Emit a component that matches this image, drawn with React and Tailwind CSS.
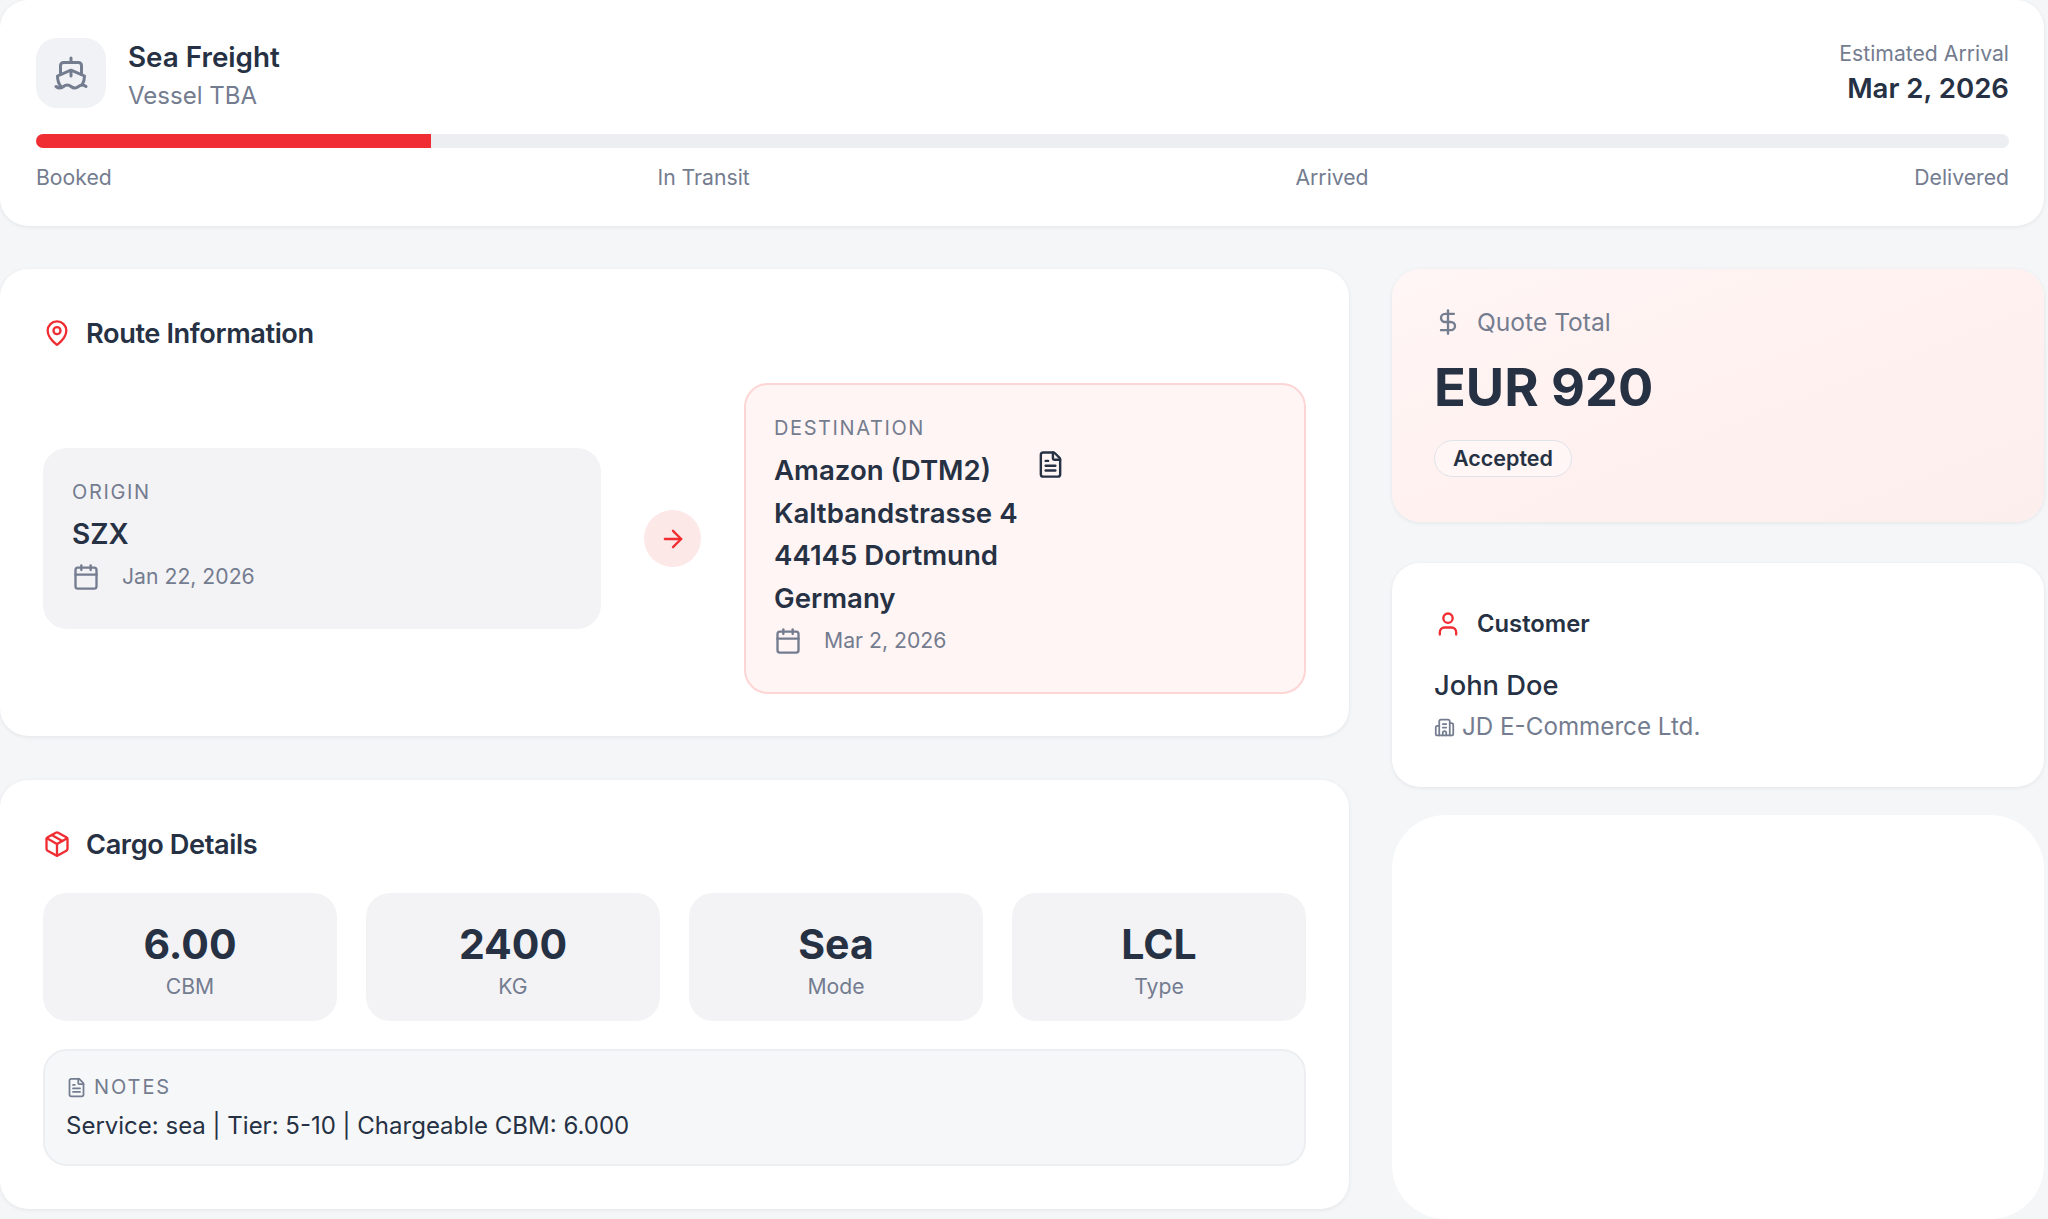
import { ArrowRight, Building2, Calendar, DollarSign, FileText, MapPin, Package, Ship, User } from "lucide-react";

const stats = [
  { value: "6.00", label: "CBM" },
  { value: "2400", label: "KG" },
  { value: "Sea", label: "Mode" },
  { value: "LCL", label: "Type" },
];

const card = "bg-white rounded-[28px] shadow-[0_1px_4px_rgba(17,24,39,0.08)]";

function SectionTitle({ icon: Icon, children }) {
  return (
    <div className="flex items-center gap-[15px] h-[28px]">
      <Icon size={28} strokeWidth={2} className="text-[#f02d32] shrink-0" />
      <h2 className="text-[27.2px] font-semibold tracking-[-0.4px] text-[#263144] translate-y-[1px]">{children}</h2>
    </div>
  );
}

function DateRow({ children }) {
  return (
    <div className="flex items-center gap-[22px] h-[28px] text-[21.2px] text-[#747c8f]">
      <Calendar size={28} strokeWidth={2} className="shrink-0" />
      <span>{children}</span>
    </div>
  );
}

export default function App() {
  return (
    <div className="min-h-[1219px] bg-[#f5f6f8] pr-[4px] font-['Inter',sans-serif] text-[#263144]">
      <header className={`${card} h-[226px] pl-[36px] pr-[35px] pt-[38px]`}>
        <div className="flex justify-between">
          <div className="flex items-start gap-[22px]">
            <div className="w-[70px] h-[70px] rounded-[21px] bg-[#f1f2f5] flex items-center justify-center">
              <Ship size={36} strokeWidth={2} className="text-[#747c8f]" />
            </div>
            <div>
              <div className="text-[27.8px] leading-[38px] font-semibold">Sea Freight</div>
              <div className="pt-[1px] text-[24px] leading-[37px] text-[#747c8f]">Vessel TBA</div>
            </div>
          </div>
          <div className="text-right">
            <div className="text-[21.2px] leading-[30px] text-[#747c8f]">Estimated Arrival</div>
            <div className="text-[27.6px] leading-[40px] font-semibold">Mar 2, 2026</div>
          </div>
        </div>
        <div className="mt-[20px] h-[14px] rounded-full bg-[#eceef2] overflow-hidden">
          <div className="h-full w-[20%] bg-[#f02d32]" />
        </div>
        <div className="mt-[15px] flex justify-between text-[21.2px] leading-[28px] text-[#747c8f]">
          <span>Booked</span>
          <span>In Transit</span>
          <span>Arrived</span>
          <span>Delivered</span>
        </div>
      </header>

      <div className="mt-[43px] flex gap-[43px] items-start">
        <div className="w-[1349px] flex flex-col gap-[44px]">
          <section className={`${card} h-[467px] px-[43px] pt-[50px]`}>
            <SectionTitle icon={MapPin}>Route Information</SectionTitle>
            <div className="mt-[36px] flex items-center">
              <div className="w-[558px] h-[181px] rounded-[24px] bg-[#f3f3f6] px-[29px] pt-[30px]">
                <div className="text-[20px] leading-[28px] tracking-[1.65px] text-[#747c8f]">ORIGIN</div>
                <div className="mt-[7px] text-[28px] leading-[42px] font-semibold">SZX</div>
                <div className="mt-[8px]">
                  <DateRow>Jan 22, 2026</DateRow>
                </div>
              </div>
              <div className="mx-[43px] w-[57px] h-[57px] rounded-full bg-[#fde8e8] flex items-center justify-center shrink-0">
                <ArrowRight size={28} strokeWidth={2} className="text-[#f02d32]" />
              </div>
              <div className="flex-1 h-[311px] rounded-[24px] bg-[#fff5f4] border-2 border-[#fdd5d5] pl-[28px] pr-[29px] pt-[29px]">
                <div className="text-[20px] leading-[28px] tracking-[1.6px] text-[#747c8f]">DESTINATION</div>
                <div className="relative mt-[7px] text-[27.6px] leading-[42.5px] font-semibold">
                  <div>Amazon (DTM2)</div>
                  <div>Kaltbandstrasse 4</div>
                  <div>44145 Dortmund</div>
                  <div>Germany</div>
                  <FileText size={29} strokeWidth={2} className="absolute left-[262px] top-[1px] text-[#263144]" />
                </div>
                <div className="mt-[8px]">
                  <DateRow>Mar 2, 2026</DateRow>
                </div>
              </div>
            </div>
          </section>

          <section className={`${card} h-[429px] px-[43px] pt-[50px]`}>
            <SectionTitle icon={Package}>Cargo Details</SectionTitle>
            <div className="mt-[35px] grid grid-cols-4 gap-[29px]">
              {stats.map((s) => (
                <div key={s.label} className="h-[128px] rounded-[24px] bg-[#f3f3f6] flex flex-col items-center pt-[23px]">
                  <div className="text-[41px] leading-[56px] font-bold">{s.value}</div>
                  <div className="text-[21.2px] leading-[30px] -mt-[1px] text-[#747c8f]">{s.label}</div>
                </div>
              ))}
            </div>
            <div className="mt-[28px] h-[117px] rounded-[24px] bg-[#f6f7f9] border-2 border-[#eceef1] px-[21px] pt-[22px]">
              <div className="flex items-center gap-[7px] h-[28px] text-[20px] tracking-[1.9px] text-[#747c8f]">
                <FileText size={21} strokeWidth={2} className="shrink-0" />
                <span>NOTES</span>
              </div>
              <div className="mt-[8px] text-[24px] leading-[34px]">Service: sea | Tier: 5-10 | Chargeable CBM: 6.000</div>
            </div>
          </section>
        </div>

        <aside className="flex-1 flex flex-col">
          <section className="h-[253px] rounded-[28px] bg-linear-to-br from-[#fff6f5] via-[#fff1f0] to-[#fdeeee] shadow-[0_1px_4px_rgba(17,24,39,0.08)] pl-[42px] pr-[43px] pt-[39px]">
            <div className="flex items-center gap-[15px] h-[28px] text-[24.6px] text-[#747c8f]">
              <DollarSign size={28} strokeWidth={2} className="shrink-0" />
              <span>Quote Total</span>
            </div>
            <div className="mt-[16px] text-[52.4px] leading-[70px] font-bold">EUR 920</div>
            <div className="mt-[18px] w-[138px] h-[37px] rounded-full border border-[#dfe3ea] bg-[#fff6f5] flex items-center justify-center text-[21.5px] font-semibold">
              Accepted
            </div>
          </section>

          <section className={`${card} mt-[41px] h-[224px] pl-[42px] pr-[43px] pt-[47px]`}>
            <div className="flex items-center gap-[15px] h-[28px]">
              <User size={28} strokeWidth={2} className="text-[#f02d32] shrink-0" />
              <h3 className="text-[23.8px] font-semibold">Customer</h3>
            </div>
            <div className="mt-[30px] text-[27.3px] leading-[36px] font-medium">John Doe</div>
            <div className="mt-[6px] flex items-center gap-[7px] text-[24.2px] leading-[34px] text-[#747c8f]">
              <Building2 size={21} strokeWidth={2} className="shrink-0" />
              <span>JD E-Commerce Ltd.</span>
            </div>
          </section>

          <section className="mt-[28px] h-[404px] rounded-[54px] bg-white" />
        </aside>
      </div>
    </div>
  );
}
